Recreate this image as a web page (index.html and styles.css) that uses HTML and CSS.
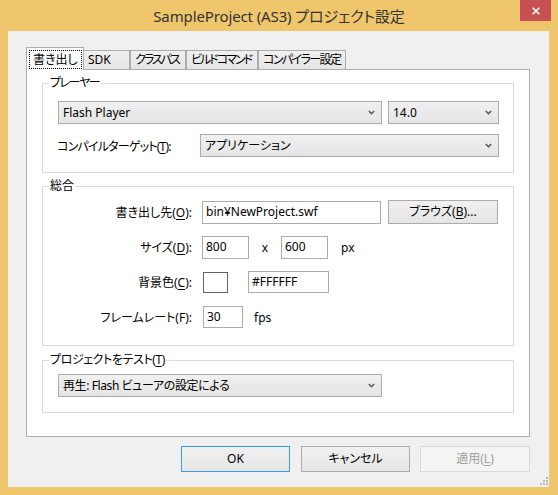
FILE: index.html
```html
<!DOCTYPE html>
<html lang="ja">
<head>
<meta charset="utf-8">
<title>SampleProject (AS3) プロジェクト設定</title>
<link rel="stylesheet" href="styles.css">
</head>
<body>
<div class="window">
  <div class="titlebar">
    <div class="title">SampleProject (AS3) プロジェクト設定</div>
    <div class="close"><svg width="8" height="8" viewBox="0 0 8 8"><path d="M0.7 0.7 L7.3 7.3 M7.3 0.7 L0.7 7.3" stroke="#fff" stroke-width="1.6" fill="none"/></svg></div>
  </div>
  <div class="client">
    <div class="tabs">
      <div class="tab active"><span class="focus">書き出し</span></div>
      <div class="tab tab-sdk">SDK</div>
      <div class="tab tab-class">クラスパス</div>
      <div class="tab tab-build">ビルドコマンド</div>
      <div class="tab tab-compiler">コンパイラー設定</div>
    </div>
    <div class="panel">
      <div class="group group-player">
        <div class="group-title title-player">プレーヤー</div>
        <div class="row">
          <div class="combo combo-player"><span>Flash Player</span><svg class="arrow" width="7" height="5" viewBox="0 0 7 5"><path d="M0.8 0.9 L3.5 3.7 L6.2 0.9" stroke="#555" stroke-width="1.5" fill="none"/></svg></div>
          <div class="combo combo-version"><span>14.0</span><svg class="arrow" width="7" height="5" viewBox="0 0 7 5"><path d="M0.8 0.9 L3.5 3.7 L6.2 0.9" stroke="#555" stroke-width="1.5" fill="none"/></svg></div>
        </div>
        <div class="row">
          <div class="label-target">コンパイルターゲット(<u>T</u>):</div>
          <div class="combo combo-target"><span>アプリケーション</span><svg class="arrow" width="7" height="5" viewBox="0 0 7 5"><path d="M0.8 0.9 L3.5 3.7 L6.2 0.9" stroke="#555" stroke-width="1.5" fill="none"/></svg></div>
        </div>
      </div>
      <div class="group group-general">
        <div class="group-title">総合</div>
        <div class="form">
          <div class="flabel">書き出し先(<u>O</u>):</div>
          <div class="fctrl">
            <div class="input input-path">bin¥NewProject.swf</div>
            <div class="button button-browse">ブラウズ(<u>B</u>)...</div>
          </div>
          <div class="flabel">サイズ(<u>D</u>):</div>
          <div class="fctrl">
            <div class="input input-size">800</div>
            <span class="times">x</span>
            <div class="input input-size">600</div>
            <span class="unit-px">px</span>
          </div>
          <div class="flabel">背景色(<u>C</u>):</div>
          <div class="fctrl">
            <div class="swatch"></div>
            <div class="input input-color">#FFFFFF</div>
          </div>
          <div class="flabel">フレームレート(F):</div>
          <div class="fctrl">
            <div class="input input-fps">30</div>
            <span class="unit-fps">fps</span>
          </div>
        </div>
      </div>
      <div class="group group-test">
        <div class="group-title title-test">プロジェクトをテスト(<u>T</u>)</div>
        <div class="combo combo-test"><span>再生: Flash ビューアの設定による</span><svg class="arrow" width="7" height="5" viewBox="0 0 7 5"><path d="M0.8 0.9 L3.5 3.7 L6.2 0.9" stroke="#555" stroke-width="1.5" fill="none"/></svg></div>
      </div>
    </div>
    <div class="buttons">
      <div class="button button-main default">OK</div>
      <div class="button button-main">キャンセル</div>
      <div class="button button-main disabled">適用(<u>L</u>)</div>
    </div>
    <svg class="grip" width="8" height="8" viewBox="0 0 8 8">
      <rect x="6" y="0" width="2" height="2" fill="#B9B9B9"/>
      <rect x="3" y="3" width="2" height="2" fill="#B9B9B9"/>
      <rect x="6" y="3" width="2" height="2" fill="#B9B9B9"/>
      <rect x="0" y="6" width="2" height="2" fill="#B9B9B9"/>
      <rect x="3" y="6" width="2" height="2" fill="#B9B9B9"/>
      <rect x="6" y="6" width="2" height="2" fill="#B9B9B9"/>
    </svg>
  </div>
</div>
</body>
</html>
```
FILE: styles.css
```css
* { box-sizing: border-box; }
html, body { margin: 0; padding: 0; }
body {
  width: 558px;
  height: 495px;
  overflow: hidden;
  font-family: "Noto Sans", "Noto Sans CJK JP", sans-serif;
  font-size: 12px;
  color: #000;
  font-feature-settings: "palt";
}
u { text-decoration: underline; text-underline-offset: 2px; }

.window {
  width: 558px;
  height: 495px;
  background: #EFC66C;
  padding: 0 9px 8px 8px;
  display: flex;
  flex-direction: column;
}
.titlebar {
  height: 31px;
  margin: 0 -9px 0 -8px;
  position: relative;
  display: flex;
  justify-content: center;
  align-items: center;
  padding-top: 1px;
}
.title {
  font-size: 15px;
  letter-spacing: -0.12px;
  color: #333;
  line-height: 20px;
  white-space: nowrap;
}
.close {
  position: absolute;
  top: 0;
  right: 7px;
  width: 31px;
  height: 21px;
  background: #C75050;
  display: flex;
  align-items: center;
  justify-content: center;
}
.close svg { display: block; }

.client {
  flex: 1;
  background: #F0F0F0;
  padding: 16px 19px 0 18px;
  position: relative;
  display: flex;
  flex-direction: column;
}

.tabs {
  display: flex;
  align-items: flex-end;
  height: 23px;
  position: relative;
  z-index: 1;
}
.tab {
  height: 19px;
  margin-bottom: 1px;
  border: 1px solid #ACACAC;
  border-bottom: none;
  background: linear-gradient(#F0F0F0, #E5E5E5);
  padding-left: 4px;
  line-height: 18px;
  white-space: nowrap;
  overflow: hidden;
}
.tab.active {
  width: 58px;
  height: 23px;
  margin-bottom: 0;
  background: #fff;
  padding-left: 2px;
  overflow: visible;
}
.focus {
  display: inline-block;
  margin-top: 2px;
  border: 1px dotted #000;
  padding: 0 3px;
  line-height: 17px;
}
.tab-sdk { width: 46px; border-left: none; }
.tab-class { width: 56px; letter-spacing: -2px; }
.tab-build { width: 72px; letter-spacing: -2px; }
.tab-compiler { width: 88px; letter-spacing: -1.6px; }

.panel {
  margin-top: -1px;
  height: 368px;
  border: 1px solid #ACACAC;
  background: #fff;
  padding: 13px 15px 0 15px;
}

.group {
  position: relative;
  border: 1px solid #DCDCDC;
}
.group-title {
  position: absolute;
  top: -9px;
  left: 6px;
  padding: 0 1px;
  background: #fff;
  line-height: 16px;
  white-space: nowrap;
}
.title-player { letter-spacing: -1.5px; padding-right: 2px; }
.title-test { letter-spacing: -0.4px; }
.group-player {
  padding: 17px 14px 15px 15px;
  display: flex;
  flex-direction: column;
  gap: 10px;
}
.group-general {
  margin-top: 13px;
  padding: 13px 14px 16px 0;
}
.group-test {
  margin-top: 14px;
  padding: 13px 14px 15px 15px;
}

.row {
  display: flex;
  align-items: center;
}
.combo {
  height: 23px;
  border: 1px solid #ACACAC;
  background: linear-gradient(#F0F0F0, #E5E5E5);
  display: flex;
  align-items: center;
  justify-content: space-between;
  padding: 0 6px 0 4px;
  line-height: 16px;
  white-space: nowrap;
}
.arrow { display: block; flex: none; }
.combo-player { width: 324px; }
.combo-version { width: 111px; margin-left: 6px; }
.combo-target { width: 299px; }
.combo-test { width: 324px; letter-spacing: -0.4px; }
.label-target {
  width: 143px;
  margin-left: -1px;
  white-space: nowrap;
  letter-spacing: -0.8px;
}

.form {
  display: grid;
  grid-template-columns: 149px 1fr;
  grid-auto-rows: 24px;
  column-gap: 10px;
  row-gap: 11px;
  align-items: center;
}
.flabel {
  text-align: right;
  white-space: nowrap;
}
.fctrl {
  display: flex;
  align-items: center;
  height: 24px;
}
.input {
  height: 23px;
  border: 1px solid #ABABAB;
  background: #fff;
  padding: 0 3px;
  display: flex;
  align-items: center;
  line-height: 16px;
  white-space: nowrap;
}
.input-path { width: 179px; }
.input-size { width: 47px; }
.input-color { width: 81px; height: 22px; }
.input-fps { width: 40px; height: 22px; margin-left: 1px; }
.times { width: 32px; text-align: center; }
.unit-px { margin-left: 13px; }
.unit-fps { margin-left: 11px; }
.swatch {
  width: 25px;
  height: 21px;
  border: 1px solid #646464;
  background: #fff;
  margin-left: 1px;
  margin-right: 20px;
}

.button {
  border: 1px solid #ACACAC;
  background: linear-gradient(#F0F0F0, #E5E5E5);
  display: flex;
  align-items: center;
  justify-content: center;
  line-height: 16px;
  white-space: nowrap;
}
.button-browse {
  width: 110px;
  height: 24px;
  margin-left: 7px;
}
.buttons {
  margin-top: 9px;
  display: flex;
  justify-content: flex-end;
  gap: 11px;
}
.button-main {
  width: 109px;
  height: 26px;
}
.button-main.default { border-color: #3C9BE6; }
.button-main.disabled {
  width: 110px;
  margin-left: -1px;
  border-color: #D9D9D9;
  background: #F4F4F4;
  color: #A0A0A0;
}

.grip {
  position: absolute;
  right: 1px;
  bottom: 2px;
  display: block;
}
```
